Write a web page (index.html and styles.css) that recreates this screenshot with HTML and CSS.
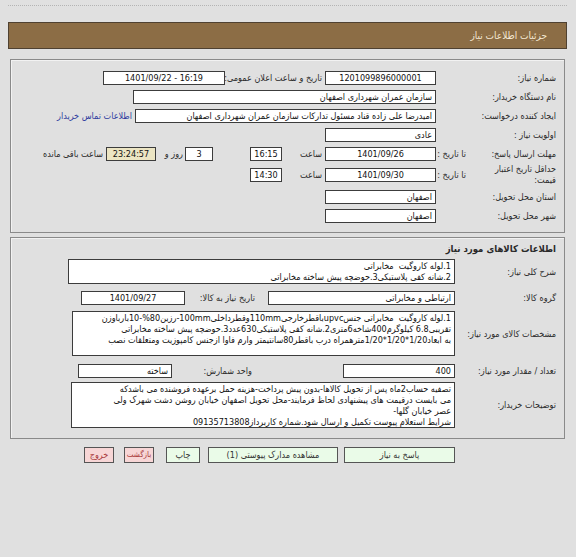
FILE: index.html
```html
<!DOCTYPE html>
<html lang="fa">
<head>
<meta charset="utf-8">
<title>جزئیات اطلاعات نیاز</title>
<link rel="stylesheet" href="styles.css">
</head>
<body>
<div class="page">
  <div class="topline"></div>
  <div class="titlebar">جزئیات اطلاعات نیاز</div>

  <div class="panel p1">
    <div class="row">
      <div class="lbl">شماره نیاز:</div>
      <div class="box w111 c">1201099896000001</div>
      <div class="mid w97">تاریخ و ساعت اعلان عمومی:</div>
      <div class="box w122 c ltr ml3">1401/09/22 - 16:19</div>
    </div>
    <div class="row">
      <div class="lbl">نام دستگاه خریدار:</div>
      <div class="box w303">سازمان عمران شهرداری اصفهان</div>
    </div>
    <div class="row">
      <div class="lbl">ایجاد کننده درخواست:</div>
      <div class="box w301">امیدرضا علی زاده قناد مسئول تدارکات سازمان عمران شهرداری اصفهان</div>
      <a class="link" href="#">اطلاعات تماس خریدار</a>
    </div>
    <div class="row">
      <div class="lbl">اولویت نیاز :</div>
      <div class="box w111">عادی</div>
    </div>
    <div class="row">
      <div class="lbl split">
        <span class="sub">مهلت ارسال پاسخ:</span>
        <span class="to">تا تاریخ :</span>
      </div>
      <div class="box w111 c ltr">1401/09/26</div>
      <div class="mid w43">ساعت</div>
      <div class="box w32 c ltr">16:15</div>
      <div class="box w28 c days">3</div>
      <div class="mid w29">روز و</div>
      <div class="box w50 c ltr remain">23:24:57</div>
      <div class="mid rest">ساعت باقی مانده</div>
    </div>
    <div class="row tall">
      <div class="lbl split">
        <span class="sub two">حداقل تاریخ اعتبار<br>قیمت:</span>
        <span class="to">تا تاریخ :</span>
      </div>
      <div class="box w111 c ltr">1401/09/30</div>
      <div class="mid w43">ساعت</div>
      <div class="box w32 c ltr">14:30</div>
    </div>
    <div class="row">
      <div class="lbl">استان محل تحویل:</div>
      <div class="box w111">اصفهان</div>
    </div>
    <div class="row">
      <div class="lbl">شهر محل تحویل:</div>
      <div class="box w111">اصفهان</div>
    </div>
  </div>

  <div class="panel p2">
    <div class="hdr">اطلاعات کالاهای مورد نیاز</div>
    <div class="row2 r-desc">
      <div class="lbl2">شرح کلی نیاز:</div>
      <div class="box area h25 w387">1.لوله کاروگیت&nbsp; مخابراتی<br>2.شانه کفی پلاستیکی3.حوضچه پیش ساخته مخابراتی</div>
    </div>
    <div class="row2 r-group">
      <div class="lbl2">گروه کالا:</div>
      <div class="box w187">ارتباطی و مخابراتی</div>
      <div class="mid w83">تاریخ نیاز به کالا:</div>
      <div class="box w104 c ltr">1401/09/27</div>
    </div>
    <div class="row2 r-spec">
      <div class="lbl2">مشخصات کالای مورد نیاز:</div>
      <div class="box area h45 w383">1.لوله کاروگیت&nbsp; مخابراتی جنسupvcباقطرخارجی110mmوقطرداخلی100mm-رزین80%-10بارباوزن<br>تقریبی6.8 کیلوگرم400شاخه6متری2.شانه کفی پلاستیکی630عدد3.حوضچه پیش ساخته مخابراتی<br>به ابعاد1/20*1/20*1/20مترهمراه درب باقطر80سانتیمتر وارم فاوا ازجنس کامپوزیت ومتعلقات نصب</div>
    </div>
    <div class="row2 r-qty">
      <div class="lbl2">تعداد / مقدار مورد نیاز:</div>
      <div class="box w112">400</div>
      <div class="mid w171">واحد شمارش:</div>
      <div class="box w94">ساخته</div>
    </div>
    <div class="row2 r-note">
      <div class="lbl2">توضیحات خریدار:</div>
      <div class="box area h46 w384">تصفیه حساب2ماه پس از تحویل کالاها-بدون پیش پرداخت-هزینه حمل برعهده فروشنده می باشدکه<br>می بایست درقیمت های پیشنهادی لحاظ فرمایند-محل تحویل اصفهان خیابان روشن دشت شهرک ولی<br>عصر خیابان گلها-<br>شرایط استعلام پیوست تکمیل و ارسال شود.شماره کاربرداز09135713808</div>
    </div>
  </div>

  <div class="buttons">
    <button class="btn green b-reply">پاسخ به نیاز</button>
    <button class="btn green b-docs">مشاهده مدارک پیوستی (1)</button>
    <button class="btn green b-print">چاپ</button>
    <button class="btn pink b-back">بازگشت</button>
    <button class="btn pink b-exit">خروج</button>
  </div>
</div>
</body>
</html>
```

FILE: styles.css
```css
* { box-sizing: border-box; }

body {
  margin: 0;
  background: #e0e0e0;
  font-family: Tahoma, "DejaVu Sans Condensed", "DejaVu Sans", sans-serif;
  font-size: 9px;
  color: #2a2a2a;
  direction: rtl;
}

.page {
  width: 576px;
  height: 557px;
  padding-top: 5px;
  overflow: hidden;
}

.topline {
  margin: 0 9px 0 8px;
  border-top: 1px dotted #b4b4b4;
}

.titlebar {
  margin: 16px 9px 0 8px;
  height: 27px;
  background: #8c6d45;
  border: 1px solid #4f4131;
  color: #f3e7d2;
  font-size: 10px;
  line-height: 25px;
  padding-right: 19px;
}

.panel {
  margin: 10px 11px 0 10px;
  border: 1px solid #8a8a8a;
  box-shadow: inset 1px 1px 0 #f2f2f2;
}

.p1 { padding: 8px 8px 7px 0; }
.p2 { margin-top: 4px; padding: 4px 8px 10px 0; }

.row {
  display: flex;
  align-items: center;
  height: 19px;
}
.row.tall { height: 24px; }

.lbl {
  width: 120px;
  flex: none;
  white-space: nowrap;
}

.split { display: flex; align-items: center; }
.split .sub { width: 86px; flex: none; white-space: nowrap; }
.split .sub.two { line-height: 11px; }
.split .to { width: 34px; flex: none; padding-right: 4px; white-space: nowrap; }

.box {
  flex: none;
  height: 14px;
  border: 1px solid #3c3c3c;
  background: #fff;
  color: #111;
  line-height: 12px;
  padding: 0 3px;
  white-space: nowrap;
  overflow: hidden;
  text-align: right;
}
.box.c { text-align: center; }
.ltr { direction: ltr; }

.mid {
  flex: none;
  white-space: nowrap;
  padding-right: 3px;
}

.w28 { width: 28px; }
.w32 { width: 32px; }
.w50 { width: 50px; }
.w94 { width: 94px; }
.w104 { width: 104px; }
.w111 { width: 111px; }
.w112 { width: 112px; }
.w122 { width: 122px; }
.w187 { width: 187px; }
.w301 { width: 301px; }
.w303 { width: 303px; }
.w383 { width: 383px; }
.w384 { width: 384px; }
.w387 { width: 387px; }

.w29 { width: 29px; padding-right: 2px; }
.w43 { width: 43px; }
.w83 { width: 83px; padding-right: 13px; }
.w97 { width: 97px; }
.w171 { width: 171px; padding-right: 91px; }

.ml3 { margin-right: 3px; }
.days { margin-right: 37px; }
.remain { background: #ece5c3; }
.rest { padding-right: 3px; }

.link {
  flex: none;
  margin-right: 3px;
  color: #2e3c9e;
  text-decoration: none;
  white-space: nowrap;
}

.hdr {
  font-weight: bold;
  font-size: 9.5px;
  line-height: 14px;
  height: 14px;
}

.row2 {
  display: flex;
  align-items: center;
}
.lbl2 {
  width: 101px;
  flex: none;
  white-space: nowrap;
}

.r-desc { margin-top: 3px; }
.r-group { margin-top: 7px; }
.r-spec { margin-top: 6px; }
.r-qty { margin-top: 8px; }
.r-note { margin-top: 4px; }

.area {
  white-space: normal;
  line-height: 11px;
  padding: 1px 3px 0 2px;
}
.h25 { height: 25px; }
.h45 { height: 45px; }
.h46 { height: 46px; }

.buttons {
  display: flex;
  margin-top: 8px;
  padding-right: 121px;
}

.btn {
  flex: none;
  height: 16px;
  padding: 0;
  border: 1px solid #555;
  font-family: Tahoma, "DejaVu Sans Condensed", "DejaVu Sans", sans-serif;
  font-size: 9px;
  line-height: 14px;
  white-space: nowrap;
  overflow: hidden;
  text-align: center;
}
.green { background: #eafbe8; color: #333; }
.pink { background: #f7d6d6; color: #a8393a; }

.b-reply { width: 111px; }
.b-docs { width: 130px; margin-right: 6px; }
.b-print { width: 34px; margin-right: 8px; }
.b-back { width: 30px; margin-right: 12px; font-size: 8px; letter-spacing: -0.2px; }
.b-exit { width: 30px; margin-right: 10px; }
```
